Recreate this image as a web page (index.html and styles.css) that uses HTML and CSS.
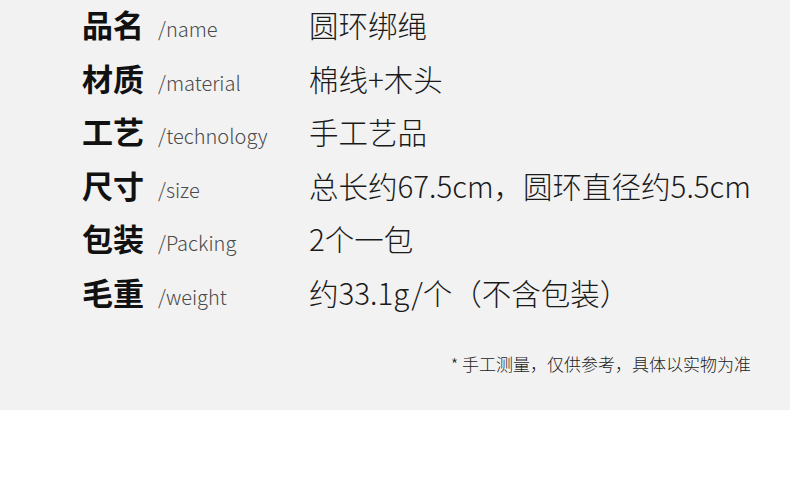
FILE: index.html
```html
<!DOCTYPE html>
<html lang="zh-CN">

<head>
    <meta charset="UTF-8" />
    <meta name="viewport" content="width=device-width, initial-scale=1.0" />
    <title>产品参数</title>
    <link rel="stylesheet" href="styles.css">
</head>

<body>
    <div class="params">
        <div class="row">
            <span class="label">品名</span>
            <span class="sub">/name</span>
            <span class="value">圆环绑绳</span>
        </div>
        <div class="row">
            <span class="label">材质</span>
            <span class="sub">/material</span>
            <span class="value">棉线+木头</span>
        </div>
        <div class="row">
            <span class="label">工艺</span>
            <span class="sub">/technology</span>
            <span class="value">手工艺品</span>
        </div>
        <div class="row">
            <span class="label">尺寸</span>
            <span class="sub">/size</span>
            <span class="value">总长约67.5cm，圆环直径约5.5cm</span>
        </div>
        <div class="row">
            <span class="label">包装</span>
            <span class="sub">/Packing</span>
            <span class="value">2个一包</span>
        </div>
        <div class="row">
            <span class="label">毛重</span>
            <span class="sub">/weight</span>
            <span class="value">约33.1g/个（不含包装）</span>
        </div>

        <p class="note">* 手工测量，仅供参考，具体以实物为准</p>
    </div>
</body>

</html>
```

FILE: styles.css
```css
body {
    margin: 0;
    background-color: #ffffff;
    font-family: "Noto Sans CJK SC", "Noto Sans", sans-serif;
}

.params {
    background-color: #f2f2f2;
    height: 410px;
    box-sizing: border-box;
    padding: 0 39px 0 82px;
}

.row {
    display: flex;
    align-items: baseline;
    height: 53.6px;
    line-height: 48px;
    white-space: nowrap;
}

.label {
    width: 76px;
    flex-shrink: 0;
    font-size: 31px;
    font-weight: 700;
    color: #111111;
}

.sub {
    width: 151px;
    flex-shrink: 0;
    font-size: 20px;
    font-weight: 300;
    color: #4a4a4a;
}

.value {
    font-size: 29.5px;
    font-weight: 300;
    color: #1a1a1a;
}

.note {
    margin: 29px 0 0 0;
    text-align: right;
    font-size: 17px;
    line-height: 25px;
    font-weight: 300;
    color: #222222;
}
```
